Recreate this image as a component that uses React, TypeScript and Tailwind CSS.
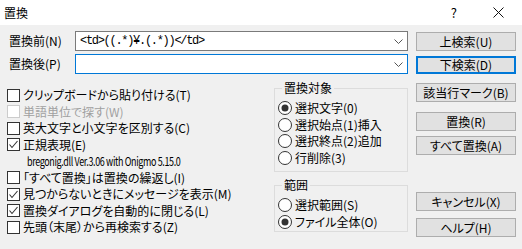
import React from 'react';

// 置換ダイアログ

const ui = "[font-family:'Noto_Sans_CJK_JP','Noto_Sans',sans-serif] [font-feature-settings:'palt']";

const CheckBox: React.FC<{ checked?: boolean; disabled?: boolean }> = ({ checked, disabled }) => (
  <span
    className={`w-[13px] h-[13px] shrink-0 flex items-center justify-center border bg-white ${
      disabled ? 'border-[#cccccc]' : 'border-[#333333]'
    }`}
  >
    {checked && (
      <svg width="11" height="11" viewBox="0 0 11 11">
        <polyline points="1.5,5.5 4,8.5 9.5,2" fill="none" stroke="#333" strokeWidth="1.1" />
      </svg>
    )}
  </span>
);

const Radio: React.FC<{ checked?: boolean }> = ({ checked }) => (
  <svg width="14" height="14" viewBox="0 0 14 14" className="shrink-0">
    <circle cx="7" cy="7" r="6.5" fill="#fff" stroke="#333" strokeWidth="1" />
    {checked && <circle cx="7" cy="7" r="3.5" fill="#333" />}
  </svg>
);

const Chevron = () => (
  <svg width="9" height="5" viewBox="0 0 9 5" className="shrink-0">
    <polyline points="0.5,0.5 4.5,4.5 8.5,0.5" fill="none" stroke="#555" strokeWidth="1" />
  </svg>
);

const Button: React.FC<{ label: string; focused?: boolean; className?: string }> = ({ label, focused, className }) => (
  <div
    className={`w-[100px] flex items-center justify-center bg-[#e1e1e1] text-[12px] text-black ${
      focused ? 'h-[18px] border-2 border-[#0078d7]' : 'h-[19px] border border-[#adadad]'
    } ${className ?? ''}`}
  >
    {label}
  </div>
);

const CheckRow: React.FC<{ label: string; checked?: boolean; disabled?: boolean }> = ({ label, checked, disabled }) => (
  <div className="h-[16.5px] flex items-center gap-[3px] pl-[7px]">
    <CheckBox checked={checked} disabled={disabled} />
    <span className={`text-[12px] whitespace-nowrap ${disabled ? 'text-[#a0a0a0]' : 'text-black'}`}>{label}</span>
  </div>
);

const RadioRow: React.FC<{ label: string; checked?: boolean }> = ({ label, checked }) => (
  <div className="h-[16.5px] flex items-center gap-[3px] pl-[2px]">
    <Radio checked={checked} />
    <span className="text-[12px] whitespace-nowrap text-black">{label}</span>
  </div>
);

export default function App() {
  return (
    <div className={`w-[522px] h-[249px] bg-[#f0f0f0] overflow-hidden ${ui}`}>
      {/* タイトルバー */}
      <div className="h-[25px] bg-white flex items-center pl-[4px]">
        <span className="text-[12px] text-black">置換</span>
        <span className="ml-auto text-[13px] text-black mr-[36px]">?</span>
        <svg width="11" height="11" viewBox="0 0 11 11" className="mr-[18px]">
          <path d="M0.5 0.5 L10.5 10.5 M10.5 0.5 L0.5 10.5" stroke="#111" strokeWidth="1" />
        </svg>
      </div>

      {/* 検索文字列 */}
      <div className="pl-[9px] pt-[6px]">
        <div className="flex items-center h-[20px]">
          <span className="w-[66px] text-[12px] text-black">置換前(N)</span>
          <div className="w-[333px] h-[20px] bg-white border border-[#7a7a7a] flex items-center pl-[4px] pr-[4px]">
            <span className="flex-1 text-[12px] [font-family:'Liberation_Mono',monospace] tracking-[-1.3px] text-black">
              {'<td>((.*)¥.(.*))</td>'}
            </span>
            <Chevron />
          </div>
          <Button label="上検索(U)" className="ml-[8px] mt-[1px]" />
        </div>
        <div className="flex items-center h-[20px] mt-[3px]">
          <span className="w-[66px] text-[12px] text-black">置換後(P)</span>
          <div className="w-[333px] h-[20px] bg-white border border-[#0078d7] flex items-center justify-end pr-[4px]">
            <Chevron />
          </div>
          <Button label="下検索(D)" focused className="ml-[8px] mt-[2px]" />
        </div>
      </div>

      {/* オプション */}
      <div className="flex mt-[6px]">
        <div className="w-[265px] pt-[7px]">
          <CheckRow label="クリップボードから貼り付ける(T)" />
          <CheckRow label="単語単位で探す(W)" disabled />
          <CheckRow label="英大文字と小文字を区別する(C)" />
          <CheckRow label="正規表現(E)" checked />
          <div className="h-[16.5px] flex items-center pl-[27px]">
            <span className="inline-block origin-left scale-x-[0.75] text-[12px] text-black whitespace-nowrap tracking-[-0.5px]">
              bregonig.dll Ver.3.06 with Onigmo 5.15.0
            </span>
          </div>
          <CheckRow label="「すべて置換」は置換の繰返し(I)" />
          <CheckRow label="見つからないときにメッセージを表示(M)" checked />
          <CheckRow label="置換ダイアログを自動的に閉じる(L)" checked />
          <CheckRow label="先頭（末尾）から再検索する(Z)" />
        </div>

        <div className="w-[134px] ml-[9px]">
          <fieldset className="border border-[#dcdcdc] h-[92px] pl-[1px]">
            <legend className="text-[12px] text-black ml-[6px] px-[2px] leading-[16px]">置換対象</legend>
            <div className="pt-[4px]">
              <RadioRow label="選択文字(0)" checked />
              <RadioRow label="選択始点(1)挿入" />
              <RadioRow label="選択終点(2)追加" />
              <RadioRow label="行削除(3)" />
            </div>
          </fieldset>
          <fieldset className="border border-[#dcdcdc] h-[55px] pl-[1px] mt-[5px]">
            <legend className="text-[12px] text-black ml-[6px] px-[2px] leading-[16px]">範囲</legend>
            <div className="pt-[4px]">
              <RadioRow label="選択範囲(S)" />
              <RadioRow label="ファイル全体(O)" checked />
            </div>
          </fieldset>
        </div>

        <div className="ml-[8px] flex flex-col pt-[3px]">
          <Button label="該当行マーク(B)" />
          <Button label="置換(R)" className="mt-[10px]" />
          <Button label="すべて置換(A)" className="mt-[5px]" />
          <Button label="キャンセル(X)" className="mt-[37px]" />
          <Button label="ヘルプ(H)" className="mt-[7px]" />
        </div>
      </div>
    </div>
  );
}
